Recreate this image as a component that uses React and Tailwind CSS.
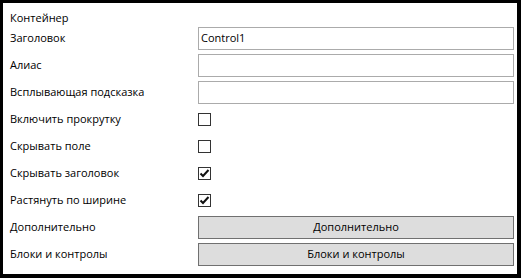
import React from 'react';

const Check = ({ checked }) => (
    <div className="w-[13px] h-[13px] border border-[#333333] bg-white flex items-center justify-center">
        {checked && (
            <svg width="11" height="11" viewBox="0 0 11 11">
                <path d="M1.5 5.5 L4 8 L9.5 2" fill="none" stroke="#111" strokeWidth="2" />
            </svg>
        )}
    </div>
);

const Row = ({ label, children }) => (
    <div className="flex items-center h-[27px]">
        <div className="w-[195px] pl-[7px]">{label}</div>
        <div className="flex-1 flex items-center">{children}</div>
    </div>
);

const TextBox = ({ value }) => (
    <div className="w-full h-[23px] border border-[#ababab] bg-white px-[2px] flex items-center">
        {value}
    </div>
);

const Btn = ({ children }) => (
    <button className="w-full h-[23px] border border-[#707070] bg-[#dddddd] flex items-center justify-center">
        {children}
    </button>
);

const App = () => {
    return (
        <div className="w-[521px] h-[278px] bg-black pl-[3px] pt-[3px] pr-[4px] pb-[4px]" style={{ fontFamily: '"Open Sans", sans-serif' }}>
            <div className="h-full bg-white pt-[7px] pr-[3px] text-[11px] text-black">
                <div className="h-[15px] leading-[15px] pl-[7px]">Контейнер</div>
                <Row label="Заголовок"><TextBox value="Control1" /></Row>
                <Row label="Алиас"><TextBox /></Row>
                <Row label="Всплывающая подсказка"><TextBox /></Row>
                <Row label="Включить прокрутку"><Check /></Row>
                <Row label="Скрывать поле"><Check /></Row>
                <Row label="Скрывать заголовок"><Check checked /></Row>
                <Row label="Растянуть по ширине"><Check checked /></Row>
                <Row label="Дополнительно"><Btn>Дополнительно</Btn></Row>
                <Row label="Блоки и контролы"><Btn>Блоки и контролы</Btn></Row>
            </div>
        </div>
    );
};

export default App;
